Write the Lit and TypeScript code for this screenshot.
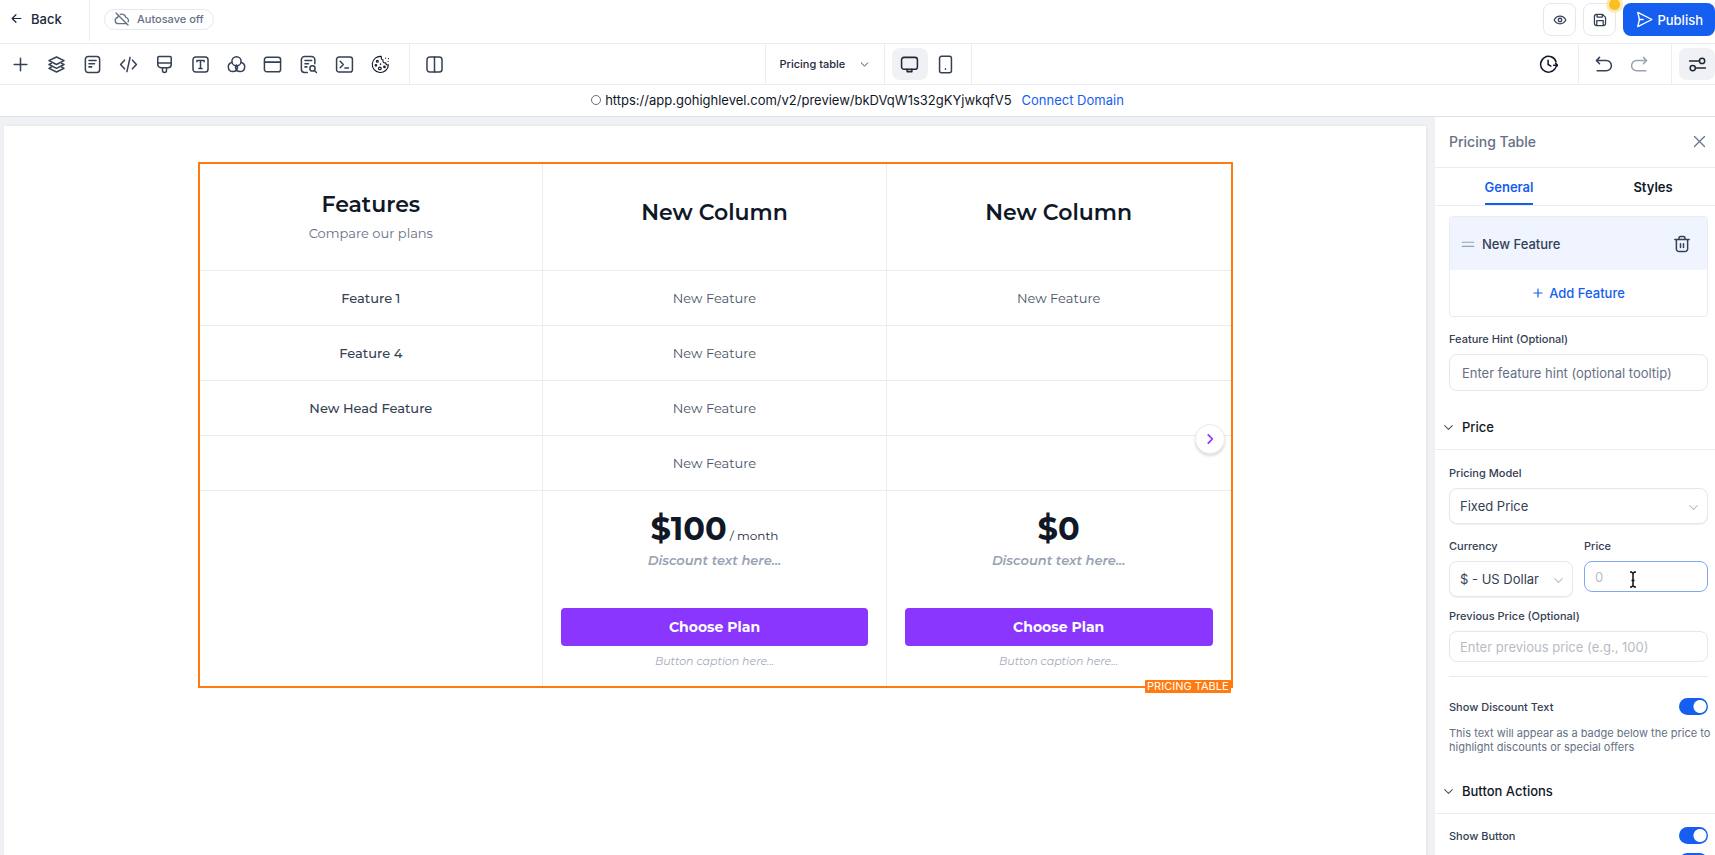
import { LitElement, html, css, svg, nothing } from "lit";
import { customElement, property } from "lit/decorators.js";

const ICONS: Record<string, unknown> = {
  back: svg`<path d="M20 12H4m7-7-7 7 7 7"/>`,
  cloudOff: svg`<path d="M3 3l18 18M9.500 5.200A6 6 0 0 1 17.600 9.600 4.800 4.800 0 0 1 21.300 16.200M6.200 7.200A7 7 0 0 0 5.600 9.700 4.700 4.700 0 0 0 6.700 19H18"/>`,
  plus: svg`<path d="M12 4v16M4 12h16"/>`,
  layers: svg`<path d="M12 2.500 2.500 7.200 12 12l9.500-4.800L12 2.500z"/><path d="M5.500 10.500 2.500 12l9.500 4.800 9.500-4.800-3-1.500"/><path d="M5.500 15.200l-3 1.600 9.500 4.700 9.500-4.700-3-1.600"/>`,
  page: svg`<rect x="3" y="2" width="18" height="20" rx="3.500"/><path d="M7.500 7h9M7.500 11h7M7.500 15h3.500"/>`,
  code: svg`<path d="M17 17.500l5-5.500-5-5.500M7 6.500 2 12l5 5.500M14 3l-4 18"/>`,
  brush: svg`<path d="M3.500 3.500A1.500 1.500 0 0 1 5 2h14a1.500 1.500 0 0 1 1.500 1.500V12a4 4 0 0 1-4 4h-9a4 4 0 0 1-4-4zM3.500 10h17M9.500 16v3.500a2.500 2.500 0 0 0 5 0V16"/>`,
  text: svg`<rect x="2.500" y="2.500" width="19" height="19" rx="3.500"/><path d="M7.500 8.500V7h9v1.500M12 7v10M10 17h4"/>`,
  circles: svg`<circle cx="12" cy="8" r="5.800"/><path d="M6.200 9.500a5.800 5.800 0 1 0 7 6.500 5.800 5.800 0 0 0-1-3.200M17.800 9.500a5.800 5.800 0 1 1-7 6.500 5.800 5.800 0 0 1 1-3.200"/>`,
  browser: svg`<rect x="1.800" y="2.800" width="20.400" height="18.400" rx="3"/><path d="M2 9h20"/>`,
  search: svg`<path d="M20 11V6a4 4 0 0 0-4-4H7a4 4 0 0 0-4 4v12a4 4 0 0 0 4 4h3.500M7.500 7h8.500M7.500 11h4.500M7.500 15H10"/><circle cx="17" cy="17" r="3.300"/><path d="M19.500 19.500 22 22"/>`,
  terminal: svg`<rect x="2" y="2.500" width="20" height="19" rx="3"/><path d="M6.500 8l4 4-4 4M12.500 16.500H17"/>`,
  cookie: svg`<g stroke-width="1.400"><path d="M13 1.800A10.200 10.200 0 1 0 22 12.500c-1.900.4-3.400-.7-3.300-2.500-2.700.4-4.300-1.200-3.400-3.600C13.500 6 12.500 4.300 13 1.800z"/><circle cx="8" cy="7.800" r="1.200"/><circle cx="6.200" cy="13" r="1"/><circle cx="11.200" cy="17" r="1.700"/><circle cx="12" cy="11.500" r=".4"/><circle cx="17" cy="15" r="1"/><path d="M18.500 3.800v.3M22 4.500v.2M21.500 8v.2"/></g>`,
  columns: svg`<rect x="2.500" y="2.500" width="19" height="19" rx="3.500"/><path d="M12 2.500v19"/>`,
  down: svg`<path d="M5 8.500l7 7 7-7"/>`,
  right: svg`<path d="M9 5l7 7-7 7"/>`,
  desktop: svg`<rect x="2" y="3" width="20" height="15" rx="3"/><path d="M9 18v3h6v-3"/>`,
  mobile: svg`<rect x="4.500" y="1.500" width="15" height="21" rx="2.500"/><path d="M12 17.500v.5"/>`,
  eye: svg`<path d="M2 12c2.200-4.200 5.600-6.500 10-6.500s7.800 2.300 10 6.500c-2.200 4.200-5.600 6.500-10 6.500S4.200 16.200 2 12z"/><circle cx="12" cy="12" r="3"/>`,
  save: svg`<path d="M6 2.500h10.500l5 5V18a3.500 3.500 0 0 1-3.500 3.500H6A3.500 3.500 0 0 1 2.500 18V6A3.500 3.500 0 0 1 6 2.500zM7 2.800V7h9V2.800M6.500 21.500V13h11v8.500"/>`,
  send: svg`<path d="M10 12H4.500M2.500 2 22.500 12 2.500 22 4.800 12z"/>`,
  history: svg`<path d="M20.500 17A10 10 0 1 1 21.500 8.500M18.500 13h5M21 10.500l2.500 2.500-2.500 2.500M11.500 6.500v5.500l3.500 2"/>`,
  undo: svg`<path d="M7 11 3 7l4-4M3 7h12.500a6.500 6.500 0 0 1 0 13H4"/>`,
  redo: svg`<path d="M17 11l4-4-4-4M21 7H8.500a6.500 6.500 0 0 0 0 13H20"/>`,
  sliders: svg`<path d="M2 7.500h12.500M9.500 16.500H22"/><circle cx="17.800" cy="7.500" r="3.300"/><circle cx="6" cy="16.500" r="3.300"/>`,
  close: svg`<path d="M4 4l16 16M20 4 4 20"/>`,
  drag: svg`<path d="M2 9h20M2 16h20"/>`,
  trash: svg`<path d="M2.500 6h19M8 5.500V4a2 2 0 0 1 2-2h4a2 2 0 0 1 2 2v1.500M4.500 6v12.500a3.500 3.500 0 0 0 3.500 3.500h8a3.500 3.500 0 0 0 3.500-3.500V6M10 11.500v5M14 11.500v5"/>`,
};

@customElement("ui-icon")
class UiIcon extends LitElement {
  @property() name = "plus";
  static styles = css`
    :host { display: inline-flex; width: 20px; height: 20px; flex: none; }
    svg { width: 100%; height: 100%; fill: none; stroke: currentColor; stroke-width: var(--stroke, 1.9); stroke-linecap: round; stroke-linejoin: round; }
  `;
  render() {
    return html`<svg viewBox="0 0 24 24" aria-hidden="true">${ICONS[this.name]}</svg>`;
  }
}

@customElement("top-bars")
class TopBars extends LitElement {
  static styles = css`
    :host { display: block; color: #344054; }
    * { box-sizing: border-box; }
    button { font: inherit; color: inherit; background: none; border: 0; padding: 0; margin: 0; display: flex; align-items: center; justify-content: center; }
    .top { height: 44px; border-bottom: 1px solid #eaecf0; display: flex; align-items: flex-start; justify-content: space-between; }
    .group { display: flex; align-items: center; }
    .backwrap { height: 41px; width: 90px; border-right: 1px solid #eaecf0; display: flex; align-items: center; padding: 0 0 4px 10px; }
    .back { gap: 8px; font-size: 13px; font-weight: 500; color: #1d2939; }
    .back ui-icon { width: 13px; height: 13px; --stroke: 2.2; }
    .saved { height: 21px; margin: 0 0 3px 14px; padding: 0 9px; border: 1px solid #e4e7ec; border-radius: 11px; display: flex; align-items: center; gap: 7px; font-size: 11px; font-weight: 500; color: #667085; }
    .saved ui-icon { width: 16px; height: 16px; --stroke: 2; }
    .actions { display: flex; gap: 7px; padding-top: 3px; }
    .square { width: 33px; height: 33px; border: 1px solid #e4e7ec; border-radius: 8px; position: relative; }
    .square ui-icon { width: 14px; height: 14px; --stroke: 2.2; }
    .dot { position: absolute; right: -8px; top: -8px; width: 17px; height: 17px; border-radius: 50%; background: #fbbf24; border: 3px solid #fde9b8; }
    .publish { height: 33px; padding: 0 12px 0 13px; background: #155eef; color: #fff; border-radius: 8px; gap: 4px; font-size: 13px; font-weight: 500; }
    .publish ui-icon { width: 17px; height: 17px; }
    .tools { height: 41px; border-bottom: 1px solid #eaecf0; display: grid; grid-template-columns: calc(50% - 93px) auto 1fr; }
    .tools .group { height: 40px; }
    .left { padding-left: 2px; }
    .tool { width: 36px; height: 32px; border-radius: 8px; }
    .tool ui-icon { width: 19px; height: 19px; }
    .rule { align-self: stretch; width: 1px; background: #eaecf0; }
    .left .rule { margin: 0 6px 0 11px; }
    .dark { color: #101828; }
    .pages { width: 118px; padding: 0 14px; display: flex; justify-content: space-between; font-size: 11px; font-weight: 500; color: #1d2939; }
    .pages ui-icon { width: 11px; height: 11px; }
    .on { background: #f0f1f4; color: #1d2939; }
    .center .on { margin: 0 0 0 7px; }
    .center .phone { margin-right: 7px; }
    .right { justify-content: flex-end; }
    .undo { margin-left: 6px; }
    .redo { color: #98a2b3; margin-right: 14px; }
    .history { margin-right: 12px; }
    .right .on { margin-left: 7px; border-radius: 8px; }
    .url { height: 32px; padding-bottom: 2px; display: flex; align-items: center; justify-content: center; font-size: 13px; color: #101828; border-bottom: 1px solid #dfe1e6; }
    .ring { width: 10px; height: 10px; border: 1px solid #667085; border-radius: 50%; margin-right: 4px; }
    .url a { color: #155eef; text-decoration: none; margin-left: 10px; }
  `;
  private tool(name: string, label: string, cls = "") {
    return html`<button class="tool ${cls}" aria-label=${label}><ui-icon name=${name}></ui-icon></button>`;
  }
  render() {
    const left = [["plus", "Add"], ["layers", "Layers"], ["page", "Pages"], ["code", "Code"], ["brush", "Theme"], ["text", "Typography"], ["circles", "Colors"], ["browser", "Popups"], ["search", "SEO"], ["terminal", "Custom code"], ["cookie", "Cookies"]];
    return html`
      <header class="top">
        <div class="group">
          <div class="backwrap"><button class="back"><ui-icon name="back"></ui-icon>Back</button></div>
          <div class="saved"><ui-icon name="cloudOff"></ui-icon>Autosave off</div>
        </div>
        <div class="actions">
          <button class="square" aria-label="Preview"><ui-icon name="eye"></ui-icon></button>
          <button class="square" aria-label="Save"><ui-icon name="save"></ui-icon><span class="dot"></span></button>
          <button class="publish"><ui-icon name="send"></ui-icon>Publish</button>
        </div>
      </header>
      <nav class="tools">
        <div class="group left">
          ${left.map(([n, l]) => this.tool(n, l, n === "cookie" ? "dark" : ""))}
          <span class="rule"></span>${this.tool("columns", "Split view")}
        </div>
        <div class="group center">
          <span class="rule"></span>
          <button class="pages">Pricing table<ui-icon name="down"></ui-icon></button>
          <span class="rule"></span>
          ${this.tool("desktop", "Desktop", "on")}${this.tool("mobile", "Mobile", "phone")}
          <span class="rule"></span>
        </div>
        <div class="group right">
          ${this.tool("history", "History", "history dark")}<span class="rule"></span>
          ${this.tool("undo", "Undo", "undo")}${this.tool("redo", "Redo", "redo")}<span class="rule"></span>
          ${this.tool("sliders", "Settings", "on")}
        </div>
      </nav>
      <div class="url"><span class="ring"></span><span>https://app.gohighlevel.com/v2/preview/bkDVqW1s32gKYjwkqfV5</span><a href="#">Connect Domain</a></div>
    `;
  }
}

@customElement("pricing-canvas")
class PricingCanvas extends LitElement {
  static styles = css`
    :host { display: block; flex: 1; min-width: 0; background: #f0f1f4; padding: 9px 9px 0 4px; }
    * { box-sizing: border-box; }
    .page { background: #fff; height: 100%; padding: 36px 20px 0; box-shadow: 1px 0 4px rgba(16, 24, 40, 0.06); }
    .frame { position: relative; max-width: 1035px; margin: 0 auto; border: 2px solid #ff7a0f; font-family: Montserrat, Inter, sans-serif; }
    table { width: 100%; border-collapse: separate; border-spacing: 0; table-layout: fixed; text-align: center; }
    th, td { padding: 0; border-right: 1px solid #eaecf0; border-bottom: 1px solid #eaecf0; height: 55px; font-size: 13px; line-height: 20px; font-weight: 400; color: #475467; }
    th:last-child, td:last-child { border-right: 0; }
    tbody th { font-weight: 500; color: #344054; }
    thead th { height: 107px; }
    .title { font-size: 22px; line-height: 32px; font-weight: 600; color: #101828; padding-bottom: 8px; }
    .lead .title { padding: 0; }
    .sub { color: #667085; line-height: 24px; }
    tfoot td { height: 195px; border-bottom: 0; padding: 21px 18px 0; vertical-align: top; }
    .price { line-height: 34px; color: #1d2939; font-size: 12px; }
    .price b { font-size: 32px; font-weight: 700; color: #101828; }
    .discount { font-style: italic; font-weight: 600; color: #98a2b3; font-size: 13px; line-height: 14px; }
    .choose { display: block; width: 100%; height: 38px; margin-top: 41px; border: 0; border-radius: 4px; background: #8b36ff; color: #fff; font: 700 14px/20px Montserrat, Inter, sans-serif; }
    .caption { font-style: italic; font-size: 11px; line-height: 16px; color: #a3abba; margin-top: 7px; }
    .tag { position: absolute; right: 0; bottom: -7px; height: 13px; padding: 0 2px; background: #ff7a0f; color: #fff; font: 11px/13px Inter, sans-serif; border-radius: 1px; }
    .next { position: absolute; right: 6px; top: 260px; width: 30px; height: 30px; border: 1px solid #eaecf0; border-radius: 50%; background: #fff; color: #8b36ff; box-shadow: 0 2px 3px rgba(16, 24, 40, 0.16); display: grid; place-items: center; padding: 0; }
    .next ui-icon { width: 14px; height: 14px; --stroke: 3; }
  `;
  render() {
    const rows = [["Feature 1", "New Feature", "New Feature"], ["Feature 4", "New Feature", ""], ["New Head Feature", "New Feature", ""], ["", "New Feature", ""]];
    const foot = (amount: string, period: string) => html`<td>
      <div class="price"><b>${amount}</b>${period ? html` ${period}` : nothing}</div>
      <div class="discount">Discount text here...</div>
      <button class="choose">Choose Plan</button>
      <div class="caption">Button caption here...</div>
    </td>`;
    return html`<main class="page"><div class="frame">
      <table>
        <thead><tr>
          <th scope="col" class="lead"><div class="title">Features</div><div class="sub">Compare our plans</div></th>
          <th scope="col"><div class="title">New Column</div></th>
          <th scope="col"><div class="title">New Column</div></th>
        </tr></thead>
        <tbody>${rows.map((r) => html`<tr><th scope="row">${r[0]}</th><td>${r[1]}</td><td>${r[2]}</td></tr>`)}</tbody>
        <tfoot><tr><td></td>${foot("$100", "/ month")}${foot("$0", "")}</tr></tfoot>
      </table>
      <button class="next" aria-label="Next columns"><ui-icon name="right"></ui-icon></button>
      <span class="tag">PRICING TABLE</span>
    </div></main>`;
  }
}

@customElement("settings-panel")
class SettingsPanel extends LitElement {
  static styles = css`
    :host { display: block; width: 280px; flex: none; background: #fff; overflow: hidden; color: #344054; }
    * { box-sizing: border-box; }
    button { font: inherit; color: inherit; background: none; border: 0; padding: 0; display: flex; align-items: center; }
    .head { height: 51px; padding: 0 8px 1px 14px; border-bottom: 1px solid #eaecf0; display: flex; align-items: center; justify-content: space-between; }
    h2 { margin: 0; font-size: 14px; font-weight: 500; color: #667085; }
    .head ui-icon { width: 15px; height: 15px; color: #667085; }
    .tabs { display: grid; grid-template-columns: 148px 140px; margin-right: -8px; height: 38px; border-bottom: 1px solid #eaecf0; justify-items: center; font-size: 13px; font-weight: 600; color: #101828; }
    .tabs .active { color: #155eef; box-shadow: inset 0 -2px 0 #155eef; }
    .body { padding: 0 7px 0 14px; }
    .list { margin-top: 10px; border: 1px solid #eaecf0; border-radius: 4px; font-size: 13px; font-weight: 500; overflow: hidden; }
    .item { height: 53px; background: #eff4ff; padding: 0 16px 0 11px; display: flex; align-items: center; gap: 7px; }
    .item span { flex: 1; }
    .item .drag { width: 14px; height: 14px; color: #98a2b3; }
    .item button ui-icon { width: 18px; height: 18px; --stroke: 2; }
    .add { width: 100%; height: 46px; justify-content: center; gap: 5px; color: #155eef; }
    .add ui-icon { width: 12px; height: 12px; --stroke: 2.4; }
    label { display: block; font-size: 11px; line-height: 16px; font-weight: 500; }
    input[type="text"], select { display: block; width: 100%; height: 37px; border: 1px solid #e4e7ec; border-radius: 8px; background: #fff; font: 400 13px/20px Inter, sans-serif; color: #344054; padding: 0 10px; appearance: none; outline: 0; }
    select { height: 36px; box-shadow: 0 1px 1px rgba(16, 24, 40, 0.06); }
    .hint label { margin: 14px 0 7px; }
    .hint input { padding: 0 12px; }
    .hint input::placeholder { color: #667085; }
    input::placeholder { color: #b8bcc4; opacity: 1; }
    .section { height: 45px; border-bottom: 1px solid #eaecf0; padding: 0 7px; display: flex; align-items: center; }
    .section button { gap: 7px; font-size: 13px; font-weight: 500; color: #101828; }
    .section ui-icon { width: 13px; height: 13px; color: #475467; }
    .first { margin-top: 14px; }
    .second { margin-top: 15px; }
    .field { position: relative; }
    .field label { margin-bottom: 7px; }
    .field ui-icon { position: absolute; right: 8px; bottom: 10px; width: 13px; height: 13px; color: #b8bcc4; pointer-events: none; }
    .model { margin-top: 15px; }
    .pair { display: grid; grid-template-columns: 1fr 1fr; gap: 11px; margin-top: 14px; }
    .field .short { height: 31px; }
    .field .focused { border-color: #84a4f8; }
    .beam { position: absolute; left: 45px; top: 33px; width: 8px; height: 17px; fill: none; stroke: #101010; stroke-width: 1.5; }
    .prev { margin-top: 11px; }
    hr { border: 0; border-top: 1px solid #eaecf0; margin: 14px 0 0; }
    .row { display: flex; justify-content: space-between; align-items: center; height: 17px; }
    .discount { margin-top: 21px; }
    .show { margin-top: 13px; }
    .more { margin-top: 9px; }
    .toggle { appearance: none; margin: 0; width: 29px; height: 17px; border-radius: 9px; background: radial-gradient(circle 7px at 21px 50%, #fff 6px, #155eef 7px); }
    p { margin: 11px -7px 0 0; font-size: 11px; line-height: 14px; color: #667085; }
  `;
  render() {
    return html`
      <div class="head"><h2>Pricing Table</h2><button aria-label="Close"><ui-icon name="close"></ui-icon></button></div>
      <div class="tabs"><button class="active">General</button><button>Styles</button></div>
      <div class="body">
        <div class="list">
          <div class="item"><ui-icon class="drag" name="drag"></ui-icon><span>New Feature</span><button aria-label="Delete feature"><ui-icon name="trash"></ui-icon></button></div>
          <button class="add"><ui-icon name="plus"></ui-icon>Add Feature</button>
        </div>
        <div class="hint"><label for="hint">Feature Hint (Optional)</label><input id="hint" type="text" placeholder="Enter feature hint (optional tooltip)" /></div>
      </div>
      <div class="section first"><button><ui-icon name="down"></ui-icon>Price</button></div>
      <div class="body">
        <div class="field model"><label for="model">Pricing Model</label><select id="model"><option>Fixed Price</option></select><ui-icon name="down"></ui-icon></div>
        <div class="pair">
          <div class="field"><label for="currency">Currency</label><select id="currency"><option>$ - US Dollar</option></select><ui-icon name="down"></ui-icon></div>
          <div class="field"><label for="price">Price</label><input id="price" class="short focused" type="text" placeholder="0" />
            <svg class="beam" viewBox="0 0 8 17" aria-hidden="true"><path d="M1 1h1.500L4 2.500 5.500 1H7M4 2.500v12M1 16h1.500L4 14.500 5.500 16H7M2.500 9.500h3"/></svg></div>
        </div>
        <div class="field prev"><label for="previous">Previous Price (Optional)</label><input id="previous" class="short" type="text" placeholder="Enter previous price (e.g., 100)" /></div>
        <hr />
        <div class="row discount"><label for="discount">Show Discount Text</label><input id="discount" class="toggle" type="checkbox" checked /></div>
        <p>This text will appear as a badge below the price to highlight discounts or special offers</p>
      </div>
      <div class="section second"><button><ui-icon name="down"></ui-icon>Button Actions</button></div>
      <div class="body">
        <div class="row show"><label for="show">Show Button</label><input id="show" class="toggle" type="checkbox" checked /></div>
        <div class="row more"><span></span><input class="toggle" type="checkbox" checked aria-label="Button option" /></div>
      </div>
    `;
  }
}

@customElement("app-root")
class AppRoot extends LitElement {
  static styles = css`
    :host { display: flex; flex-direction: column; height: 100vh; overflow: hidden; background: #fff; font-family: Inter, sans-serif; }
    .work { flex: 1; min-height: 0; display: flex; }
  `;
  render() {
    return html`<top-bars></top-bars><div class="work"><pricing-canvas></pricing-canvas><settings-panel></settings-panel></div>`;
  }
}
